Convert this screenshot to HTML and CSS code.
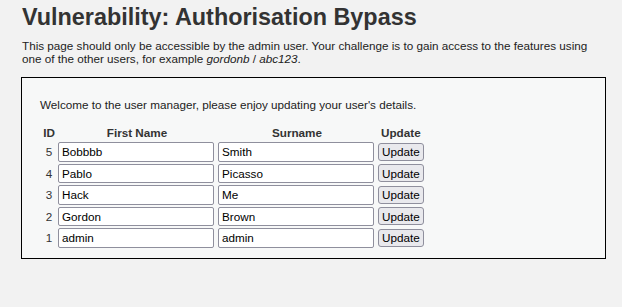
FILE: index.html
```html
<!DOCTYPE html>
<html lang="en">
  <head>
    <meta charset="UTF-8" />
    <title>Vulnerability: Authorisation Bypass</title>
    <link rel="stylesheet" href="styles.css">
  </head>
  <body>
    <div class="body-padded">
      <h1>Vulnerability: Authorisation Bypass</h1>
      <p class="intro">
        This page should only be accessible by the admin user. Your challenge is to gain access to the features using
        one of the other users, for example <em>gordonb</em> / <em>abc123</em>.
      </p>
      <div class="code-area">
        <p class="welcome">Welcome to the user manager, please enjoy updating your user's details.</p>
        <table class="users">
          <thead>
            <tr><th class="id">ID</th><th>First Name</th><th>Surname</th><th>Update</th></tr>
          </thead>
          <tbody>
            <tr>
              <td class="id">5</td>
              <td class="field"><input type="text" value="Bobbbb"></td>
              <td class="field"><input type="text" value="Smith"></td>
              <td><button>Update</button></td>
            </tr>
            <tr>
              <td class="id">4</td>
              <td class="field"><input type="text" value="Pablo"></td>
              <td class="field"><input type="text" value="Picasso"></td>
              <td><button>Update</button></td>
            </tr>
            <tr>
              <td class="id">3</td>
              <td class="field"><input type="text" value="Hack"></td>
              <td class="field"><input type="text" value="Me"></td>
              <td><button>Update</button></td>
            </tr>
            <tr>
              <td class="id">2</td>
              <td class="field"><input type="text" value="Gordon"></td>
              <td class="field"><input type="text" value="Brown"></td>
              <td><button>Update</button></td>
            </tr>
            <tr>
              <td class="id">1</td>
              <td class="field"><input type="text" value="admin"></td>
              <td class="field"><input type="text" value="admin"></td>
              <td><button>Update</button></td>
            </tr>
          </tbody>
        </table>
      </div>
    </div>
  </body>
</html>
```

FILE: styles.css
```css
* {
  box-sizing: border-box;
}
body {
  margin: 0;
  background-color: #f2f2f2;
  color: #333;
  font-family: 'Liberation Sans', Arial, sans-serif;
}
.body-padded {
  padding: 3px 16px 0 22px;
}
h1 {
  margin: 0;
  font-size: 23.4px;
  line-height: 28px;
  font-weight: bold;
  color: #333;
}
.intro {
  margin: 8px 0 0;
  width: 570px;
  font-size: 11.7px;
  line-height: 13px;
  color: #222;
}
.code-area {
  margin-top: 12px;
  margin-left: -1px;
  width: 585px;
  padding: 20px 18px 8px;
  border: 1px solid #000;
  background-color: #f7f8f8;
}
.welcome {
  margin: 0 0 12px;
  font-size: 11.7px;
  line-height: 14px;
  color: #222;
}
.users {
  border-collapse: separate;
  border-spacing: 2px;
  font-size: 11.7px;
  color: #333;
}
.users th {
  font-weight: bold;
  padding: 0;
  line-height: 14px;
}
.users th.id {
  width: 14px;
}
.users td {
  padding: 0;
}
.users td.id {
  text-align: center;
}
.users td.field {
  padding-right: 2px;
}
.users input {
  display: block;
  width: 156px;
  height: 19.5px;
  padding: 1px 3px;
  font: 11.7px 'Liberation Sans', Arial, sans-serif;
  color: #000;
  border: 1px solid #8f8f9d;
  border-radius: 2px;
  background: #fff;
}
.users button {
  display: block;
  height: 18px;
  padding: 0 3px;
  font: 11.7px 'Liberation Sans', Arial, sans-serif;
  color: #000;
  border: 1px solid #8f8f9d;
  border-radius: 3px;
  background: #e9e9ed;
}
```
